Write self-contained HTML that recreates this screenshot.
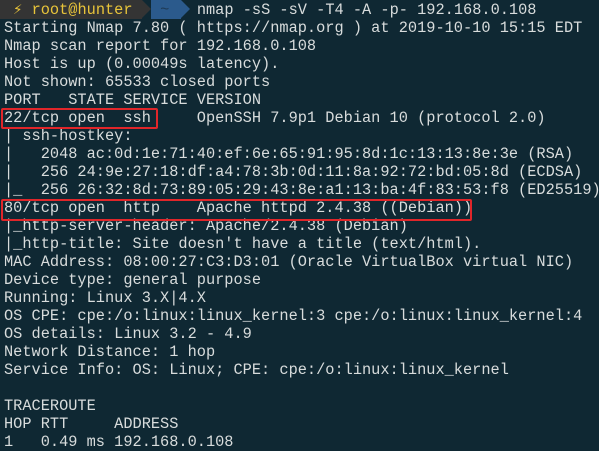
<!DOCTYPE html>
<html><head><style>
html,body{margin:0;padding:0;width:599px;height:451px;overflow:hidden;background:#0f2833;}
pre{margin:0;position:absolute;left:4px;top:1px;font-family:"Liberation Mono","DejaVu Sans Mono",monospace;font-size:15.3px;line-height:18px;color:#d8dcdc;}
.seg1{position:absolute;left:0;top:0;width:142px;height:19px;background:#343434;}
.arr1{position:absolute;left:142px;top:0;width:0;height:0;border-top:9.5px solid transparent;border-bottom:9.5px solid transparent;border-left:9px solid #343434;}
.seg2{position:absolute;left:151px;top:0;width:30px;height:19px;background:#2b5a8c;}
.arr2{position:absolute;left:181px;top:0;width:0;height:0;border-top:9.5px solid transparent;border-bottom:9.5px solid transparent;border-left:9px solid #2b5a8c;}
.box{position:absolute;border:2px solid #e0262a;border-radius:2px;}
</style></head><body>
<div class="seg1"></div><div class="arr1"></div><div class="seg2"></div><div class="arr2"></div>
<pre><span style="color:#e8c43a"> ⚡ root@hunter </span>  <span style="color:#1e3a55">~</span>   nmap -sS -sV -T4 -A -p- 192.168.0.108
Starting Nmap 7.80 ( https://nmap.org ) at 2019-10-10 15:15 EDT
Nmap scan report for 192.168.0.108
Host is up (0.00049s latency).
Not shown: 65533 closed ports
PORT   STATE SERVICE VERSION
22/tcp open  ssh     OpenSSH 7.9p1 Debian 10 (protocol 2.0)
| ssh-hostkey: 
|   2048 ac:0d:1e:71:40:ef:6e:65:91:95:8d:1c:13:13:8e:3e (RSA)
|   256 24:9e:27:18:df:a4:78:3b:0d:11:8a:92:72:bd:05:8d (ECDSA)
|_  256 26:32:8d:73:89:05:29:43:8e:a1:13:ba:4f:83:53:f8 (ED25519)
80/tcp open  http    Apache httpd 2.4.38 ((Debian))
|_http-server-header: Apache/2.4.38 (Debian)
|_http-title: Site doesn't have a title (text/html).
MAC Address: 08:00:27:C3:D3:01 (Oracle VirtualBox virtual NIC)
Device type: general purpose
Running: Linux 3.X|4.X
OS CPE: cpe:/o:linux:linux_kernel:3 cpe:/o:linux:linux_kernel:4
OS details: Linux 3.2 - 4.9
Network Distance: 1 hop
Service Info: OS: Linux; CPE: cpe:/o:linux:linux_kernel

TRACEROUTE
HOP RTT     ADDRESS
1   0.49 ms 192.168.0.108</pre>
<div class="box" style="left:1px;top:108px;width:153px;height:17px;"></div>
<div class="box" style="left:1px;top:199px;width:467px;height:18px;"></div>
</body></html>
